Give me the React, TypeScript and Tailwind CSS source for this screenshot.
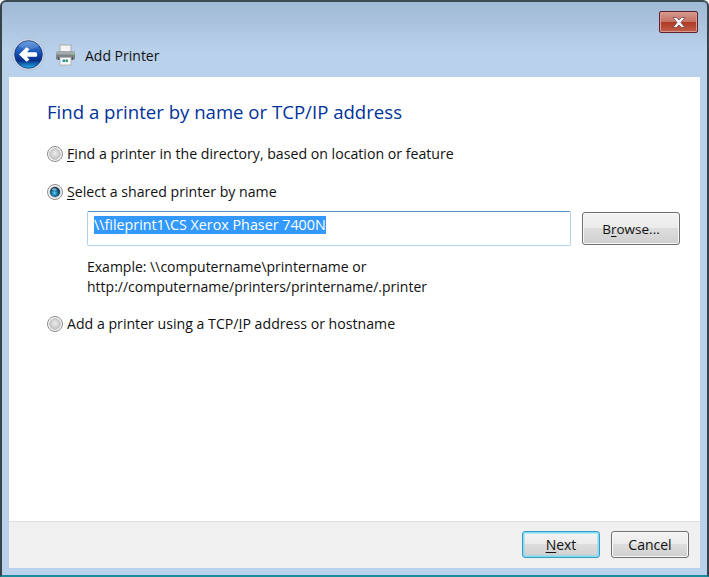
import React from "react";

const font = { fontFamily: '"Open Sans", "Noto Sans", sans-serif' };

function Radio({ checked }: { checked?: boolean }) {
  return (
    <svg width="16" height="16" viewBox="0 0 16 16" className="shrink-0">
      <defs>
        <radialGradient id="rEmpty" cx="0.5" cy="0.45" r="0.6">
          <stop offset="0" stopColor="#ececec" />
          <stop offset="1" stopColor="#bdbdbd" />
        </radialGradient>
        <radialGradient id="rDot" cx="0.45" cy="0.6" r="0.55">
          <stop offset="0" stopColor="#62d2f0" />
          <stop offset="0.55" stopColor="#12709c" />
          <stop offset="1" stopColor="#0b2f52" />
        </radialGradient>
      </defs>
      <circle cx="8" cy="8" r="7.5" fill="#f6f6f6" stroke="#8a8b8b" strokeWidth="1" />
      <circle cx="8" cy="8" r="5.4" fill="url(#rEmpty)" stroke="#a8a8a8" strokeWidth="0.5" />
      {checked && <circle cx="8" cy="8" r="5" fill="url(#rDot)" />}
      {checked && <ellipse cx="7.4" cy="5.4" rx="2.4" ry="1.1" fill="#ffffff" opacity="0.5" />}
    </svg>
  );
}

function BackIcon() {
  return (
    <svg width="33" height="33" viewBox="0 0 33 33">
      <defs>
        <linearGradient id="bk" x1="0" y1="0" x2="0" y2="1">
          <stop offset="0" stopColor="#4f8fdc" />
          <stop offset="0.5" stopColor="#0f49b0" />
          <stop offset="0.72" stopColor="#062f86" />
          <stop offset="1" stopColor="#25b4ee" />
        </linearGradient>
      </defs>
      <circle cx="16.5" cy="16.5" r="16.2" fill="#c5d3e6" stroke="#a6b9d2" strokeWidth="0.6" />
      <circle cx="16.5" cy="16.5" r="13.8" fill="url(#bk)" stroke="#0c2f70" strokeWidth="0.8" />
      <path d="M6 8 A 13 13 0 0 1 27 8 Q 16.5 15 6 8 Z" fill="#ffffff" opacity="0.14" />
      <path d="M7 16.5 L14.5 9.2 L17.5 11.2 L15 14.2 L24.5 14.2 Q26 16.5 24.5 18.8 L15 18.8 L17.5 21.8 L14.5 23.8 Z" fill="#ffffff" />
    </svg>
  );
}

function PrinterIcon() {
  return (
    <svg width="21" height="22" viewBox="0 0 21 22">
      <rect x="5" y="1" width="11" height="7" fill="#f4f4f4" stroke="#a9a9a9" />
      <path d="M1 10 Q1 7.5 3.5 7.5 H17.5 Q20 7.5 20 10 V15.5 H1 Z" fill="#7d8489" />
      <rect x="1" y="7.5" width="19" height="3" fill="#a3a9ad" />
      <rect x="3" y="13" width="15" height="3" fill="#4d5357" />
      <rect x="16.5" y="9.5" width="2" height="1.5" fill="#6fd06b" />
      <rect x="5" y="13.5" width="11" height="7.5" fill="#fbfbfb" stroke="#b6b6b6" />
      <rect x="7.5" y="15.5" width="2.5" height="2.5" fill="#2c8cc0" />
      <rect x="10.5" y="15.5" width="2.5" height="2.5" fill="#3b9a58" />
    </svg>
  );
}

function Btn({ children, focus, className }: { children: React.ReactNode; focus?: boolean; className: string }) {
  return (
    <div
      className={`${className} flex items-center justify-center rounded-[3px] border text-[14px] text-[#111] ${
        focus ? "border-[#3c9ac9] shadow-[inset_0_0_0_1.5px_#7fdcf5]" : "border-[#707070] shadow-[inset_0_0_0_1px_#f8f8f8]"
      } bg-[linear-gradient(#f3f3f3_0%,#ebebeb_49%,#dddddd_50%,#cfcfcf_100%)]`}
    >
      <span>{children}</span>
    </div>
  );
}

function Option({ checked, mark, before, after }: { checked?: boolean; mark: string; before: string; after: string }) {
  return (
    <div className="flex items-center gap-[4px] h-[22px] text-[14.15px] text-[#111]">
      <Radio checked={checked} />
      <span>
        {before}
        <span className="underline underline-offset-2">{mark}</span>
        {after}
      </span>
    </div>
  );
}

export default function App() {
  return (
    <div style={font} className="w-[709px] h-[577px] overflow-hidden rounded-t-[6px] border-t-2 border-x-2 border-b-2 border-t-[#3c4a52] border-x-[#38424a] border-b-[#1b8c9c] bg-[linear-gradient(#a0b9d4_0px,#b9d1ea_50px,#b9d1ea_100%)] flex flex-col">
      <div className="h-[31px] shrink-0 flex justify-end items-start pt-[9px] pr-[9px]">
        <div className="w-[39px] h-[22px] rounded-[2px] border border-[#5c2030] shadow-[inset_0_0_0_1px_#dc9a8e] bg-[linear-gradient(#d39a8d_0%,#c77264_48%,#b03a22_52%,#c0604c_100%)] flex items-center justify-center">
          <svg width="16" height="13" viewBox="0 0 16 13">
            <path d="M2 1.5 H5.5 L8 4 L10.5 1.5 H14 L10 6.5 L14 11.5 H10.5 L8 9 L5.5 11.5 H2 L6 6.5 Z" fill="#f2f3f6" stroke="#6b3c48" strokeWidth="0.7" />
          </svg>
        </div>
      </div>
      <div className="h-[44px] shrink-0 flex items-start pl-[10px] pt-[5px]">
        <BackIcon />
        <div className="ml-[10px] mt-[6px]">
          <PrinterIcon />
        </div>
        <span className="ml-[9px] mt-[8px] text-[14px] leading-[20px] text-[#111]">Add Printer</span>
      </div>
      <div className="mx-[7px] flex-1 flex flex-col min-h-0">
        <div className="flex-1 bg-white pl-[38px] pt-[21px] pr-[20px]">
          <div className="text-[18.6px] leading-[28px] text-[#003399]">Find a printer by name or TCP/IP address</div>
          <div className="mt-[17px]">
            <Option mark="F" before="" after="ind a printer in the directory, based on location or feature" />
          </div>
          <div className="mt-[16px]">
            <Option checked mark="S" before="" after="elect a shared printer by name" />
          </div>
          <div className="mt-[8px] ml-[40px] flex items-start">
            <div className="w-[484px] h-[35px] rounded-[2px] border border-[#b5cfe7] border-t-[#5b8db8] pl-[6px] pt-[4px] flex items-start text-white">
              <span className="bg-[#3399ff] h-[18px] text-[14.3px] leading-[18px]">\\fileprint1\CS Xerox Phaser 7400N</span>
            </div>
            <Btn className="ml-[11px] w-[98px] h-[33px] mt-[1px]">
              <span className="text-[13.5px]">
                B<span className="underline underline-offset-2">r</span>owse...
              </span>
            </Btn>
          </div>
          <div className="mt-[11px] ml-[40px] text-[14px] leading-[20px] text-[#111]">
            Example: \\computername\printername or
            <br />
            http://computername/printers/printername/.printer
          </div>
          <div className="mt-[16px]">
            <Option mark="I" before="Add a printer using a TCP/" after="P address or hostname" />
          </div>
        </div>
        <div className="h-[47px] shrink-0 bg-[#f0f0f0] border-t border-[#dfdfdf] flex justify-end items-start pt-[9px] pr-[11px] gap-[11px]">
          <Btn focus className="w-[78px] h-[27px]">
            <span className="underline underline-offset-2">N</span>ext
          </Btn>
          <Btn className="w-[78px] h-[27px]">Cancel</Btn>
        </div>
      </div>
      <div className="h-[7px] shrink-0" />
    </div>
  );
}
